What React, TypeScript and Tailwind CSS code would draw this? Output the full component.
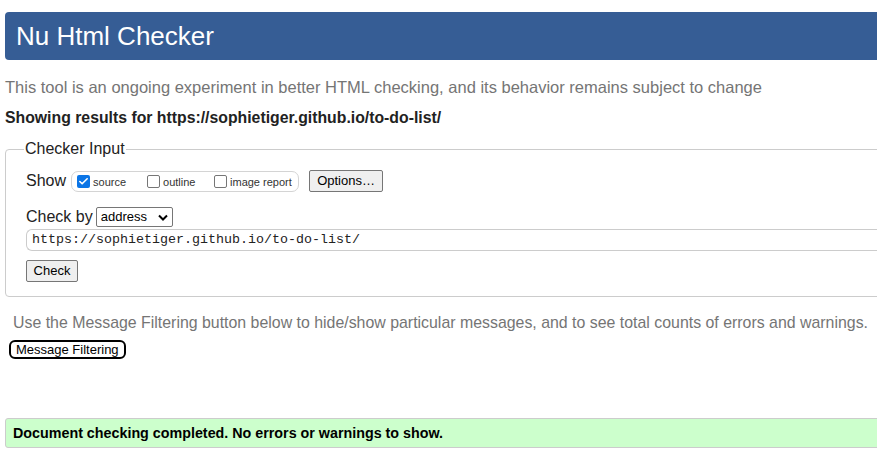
import { Check } from 'lucide-react';

function Box({ checked }: { checked?: boolean }) {
  if (checked) {
    return (
      <span className="inline-flex w-[13px] h-[13px] rounded-[2px] bg-[#0b75e6] items-center justify-center">
        <Check size={11} strokeWidth={3.5} className="text-white" />
      </span>
    );
  }
  return <span className="inline-block w-[13px] h-[13px] rounded-[2px] border border-[#767676] bg-white" />;
}

export default function App() {
  return (
    <div className="w-[877px] h-[457px] overflow-hidden bg-white font-['Liberation_Sans',Arial,sans-serif]">
      <div className="w-[940px] pl-[5px] pt-[12px]">
        {/* header */}
        <div className="h-[48px] bg-[#365d95] rounded-[4px] flex items-center pl-[11px]">
          <h1 className="text-[26px] text-white leading-none">Nu Html Checker</h1>
        </div>

        <p className="mt-[18px] text-[16.5px] text-[#757575] leading-[18px] whitespace-nowrap">
          This tool is an ongoing experiment in better HTML checking, and its behavior remains subject to change
        </p>
        <p className="mt-[13px] text-[15.8px] font-bold text-[#222] leading-[18px]">
          Showing results for https://sophietiger.github.io/to-do-list/
        </p>

        {/* checker input */}
        <fieldset className="mt-[13px] border border-[#cccccc] rounded-[4px] pl-[20px] pr-0 pb-[14px] pt-[8px]">
          <legend className="text-[16px] text-[#222] px-[1px] ml-[-2px] leading-[18px]">Checker Input</legend>

          <div className="flex items-center h-[22px] mt-[4px]">
            <span className="text-[16px] text-[#222] mr-[5px]">Show</span>
            <div className="flex items-center h-[21px] w-[228px] border border-[#d4d4d4] rounded-[7px] pl-[5px] text-[11px] text-[#333]">
              <label className="flex items-end gap-[3px] w-[70px]">
                <Box checked />
                <span className="leading-[11px]">source</span>
              </label>
              <label className="flex items-end gap-[3px] w-[67px]">
                <Box />
                <span className="leading-[11px]">outline</span>
              </label>
              <label className="flex items-end gap-[3px]">
                <Box />
                <span className="leading-[11px]">image report</span>
              </label>
            </div>
            <button className="ml-[10px] h-[22px] w-[74px] border border-[#767676] rounded-[2px] bg-[#efefef] text-[13px] text-black">
              Options…
            </button>
          </div>

          <div className="flex items-center mt-[15px] h-[20px]">
            <span className="text-[16px] text-[#222] mr-[3px]">Check by</span>
            <div className="h-[20px] w-[77px] border border-[#767676] rounded-[2px] flex items-center justify-between pl-[4px] pr-[4px] text-[13px] text-black">
              <span>address</span>
              <svg width="10" height="7" viewBox="0 0 10 7">
                <path d="M1 1.5 L5 5.5 L9 1.5" fill="none" stroke="black" strokeWidth="2" />
              </svg>
            </div>
          </div>

          <div className="mt-[2px] h-[22px] border border-[#cccccc] rounded-l-[6px] border-r-0 flex items-center pl-[5px] font-['Liberation_Mono',monospace] text-[13.33px] text-[#222]">
            https://sophietiger.github.io/to-do-list/
          </div>

          <button className="mt-[9px] h-[22px] w-[52px] border border-[#767676] rounded-[2px] bg-[#efefef] text-[13px] text-black">
            Check
          </button>
        </fieldset>

        <p className="mt-[17px] ml-[8px] text-[15.9px] text-[#757575] leading-[18px] whitespace-nowrap">
          Use the Message Filtering button below to hide/show particular messages, and to see total counts of errors and warnings.
        </p>
        <button className="mt-[8px] ml-[4px] h-[19px] px-[5px] border-2 border-black rounded-[6px] bg-white text-[13px] text-black leading-none">
          Message Filtering
        </button>

        <div className="mt-[57px] h-[30px] bg-[#ccffcc] border border-[#cccccc] rounded-[3px] flex items-center pl-[7px] text-[14.3px] font-bold text-black">
          Document checking completed. No errors or warnings to show.
        </div>
      </div>
    </div>
  );
}
